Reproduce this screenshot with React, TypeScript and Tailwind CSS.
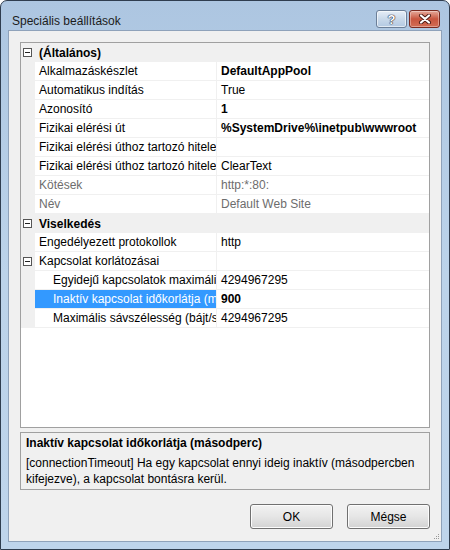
import React from "react"

type Row =
  | { kind: "cat"; label: string; bold?: boolean; minus?: boolean; indent?: boolean }
  | { kind: "prop"; label: string; value: string; bold?: boolean; dim?: boolean; indent?: boolean; selected?: boolean; minus?: boolean }

const rows: Row[] = [
  { kind: "cat", label: "(Általános)", bold: true, minus: true },
  { kind: "prop", label: "Alkalmazáskészlet", value: "DefaultAppPool", bold: true },
  { kind: "prop", label: "Automatikus indítás", value: "True" },
  { kind: "prop", label: "Azonosító", value: "1", bold: true },
  { kind: "prop", label: "Fizikai elérési út", value: "%SystemDrive%\\inetpub\\wwwroot", bold: true },
  { kind: "prop", label: "Fizikai elérési úthoz tartozó hitelesítő adatok", value: "" },
  { kind: "prop", label: "Fizikai elérési úthoz tartozó hitelesítési típus", value: "ClearText" },
  { kind: "prop", label: "Kötések", value: "http:*:80:", dim: true },
  { kind: "prop", label: "Név", value: "Default Web Site", dim: true },
  { kind: "cat", label: "Viselkedés", bold: true, minus: true },
  { kind: "prop", label: "Engedélyezett protokollok", value: "http" },
  { kind: "prop", label: "Kapcsolat korlátozásai", value: "", minus: true },
  { kind: "prop", label: "Egyidejű kapcsolatok maximális száma", value: "4294967295", indent: true },
  { kind: "prop", label: "Inaktív kapcsolat időkorlátja (másodperc)", value: "900", bold: true, indent: true, selected: true },
  { kind: "prop", label: "Maximális sávszélesség (bájt/s)", value: "4294967295", indent: true },
]

function MinusBox() {
  return (
    <span className="relative block w-[9px] h-[9px] border border-[#555] bg-white">
      <span className="absolute left-[1px] top-[3px] w-[5px] h-[1px] bg-[#222]" />
    </span>
  )
}

function GridRow({ row }: { row: Row }) {
  if (row.kind === "cat") {
    return (
      <div className="flex h-[19px] bg-[#f0f0f0]">
        <div className="w-[14px] flex items-center pl-[2px]">{row.minus && <MinusBox />}</div>
        <div className="pl-[4px] pt-[1px] leading-[18px] font-bold text-black">{row.label}</div>
      </div>
    )
  }
  return (
    <div className="flex h-[19px]">
      <div className="w-[14px] shrink-0 flex items-center pl-[2px] bg-[#f0f0f0]">{row.minus && <MinusBox />}</div>
      <div
        className={
          "w-[182px] shrink-0 overflow-hidden whitespace-nowrap border-r border-b border-[#f0f0f0] pt-[1px] leading-[17px] " +
          (row.indent ? "pl-[18px] " : "pl-[4px] ") +
          (row.selected ? "bg-[#3399ff] text-white" : row.dim ? "text-[#6d6d6d]" : "text-black")
        }
      >
        {row.label}
      </div>
      <div
        className={
          "flex-1 overflow-hidden whitespace-nowrap border-b border-[#f0f0f0] pl-[4px] pt-[1px] leading-[17px] " +
          (row.bold ? "font-bold " : "") +
          (row.dim ? "text-[#6d6d6d]" : "text-black")
        }
      >
        {row.value}
      </div>
    </div>
  )
}

function CaptionButtons() {
  return (
    <div className="flex gap-[2px] mt-[9px] mr-[9px]">
      <div className="w-[31px] h-[18px] rounded-[3px] border border-[#6c7f98] bg-gradient-to-b from-[#e6eef7] via-[#c9d9ea] to-[#b3c9e2] flex items-center justify-center shadow-[inset_0_0_0_1px_rgba(255,255,255,0.6)]">
        <span className="text-[13px] leading-none font-bold text-white [text-shadow:0_0_1px_#223,0_0_1px_#223,0_0_1px_#223]">?</span>
      </div>
      <div className="w-[31px] h-[18px] rounded-[3px] border border-[#7a2a20] bg-gradient-to-b from-[#e4a99b] via-[#c8553f] to-[#d26d55] flex items-center justify-center shadow-[inset_0_0_0_1px_rgba(255,255,255,0.35)]">
        <svg width="14" height="10" viewBox="0 0 14 10">
          <path d="M3 1.5 L11 8.5 M11 1.5 L3 8.5" stroke="#4a1a14" strokeWidth="4" strokeLinecap="round" />
          <path d="M3 1.5 L11 8.5 M11 1.5 L3 8.5" stroke="#ffffff" strokeWidth="2.2" strokeLinecap="round" />
        </svg>
      </div>
    </div>
  )
}

function Btn({ children }: { children: React.ReactNode }) {
  return (
    <div className="w-[83px] h-[25px] rounded-[3px] border border-[#707070] bg-gradient-to-b from-[#f2f2f2] via-[#e6e6e6] to-[#d2d2d2] flex items-center justify-center text-black shadow-[inset_0_0_0_1px_#fcfcfc]">
      {children}
    </div>
  )
}

export default function App() {
  return (
    <div className="w-[450px] h-[550px] font-['Segoe_UI','Liberation_Sans',sans-serif] text-[12px] text-black">
      <div className="w-[450px] h-[550px] flex flex-col border border-[#2f3d4f] rounded-t-[7px] bg-gradient-to-b from-[#adc6e1] via-[#bcd3ea] to-[#bed4eb]">
        <div className="h-[29px] flex items-start shrink-0">
          <div className="pl-[11px] pt-[12px] leading-[16px] text-[#1b1b1b]">Speciális beállítások</div>
          <div className="ml-auto">
            <CaptionButtons />
          </div>
        </div>
        <div className="flex-1 px-[7px] pb-[7px] flex">
          <div className="relative flex-1 flex flex-col border border-[#8fa2ba] bg-[#f0f0f0] p-[11px]">
            <div className="h-[386px] border border-[#a0a0a0] bg-white flex flex-col">
              {rows.map((r, i) => (
                <GridRow key={i} row={r} />
              ))}
            </div>
            <div className="mt-[4px] h-[58px] border border-[#a0a0a0] bg-[#f0f0f0] px-[5px] pt-[2px]">
              <div className="font-bold leading-[16px]">Inaktív kapcsolat időkorlátja (másodperc)</div>
              <div className="mt-[4px] leading-[16px]">
                [connectionTimeout] Ha egy kapcsolat ennyi ideig inaktív (másodpercben kifejezve), a kapcsolat bontásra kerül.
              </div>
            </div>
            <div className="mt-[14px] flex justify-end gap-[14px]">
              <Btn>OK</Btn>
              <Btn>Mégse</Btn>
            </div>
            <div className="absolute right-[2px] bottom-[2px] flex flex-col items-end gap-[1px]">
              <div className="flex gap-[1px]"><span className="w-[1px] h-[1px] bg-[#999]" /></div>
              <div className="flex gap-[1px]"><span className="w-[1px] h-[1px] bg-[#999]" /><span className="w-[1px] h-[1px] bg-[#999]" /></div>
              <div className="flex gap-[1px]"><span className="w-[1px] h-[1px] bg-[#999]" /><span className="w-[1px] h-[1px] bg-[#999]" /><span className="w-[1px] h-[1px] bg-[#999]" /></div>
            </div>
          </div>
        </div>
      </div>
    </div>
  )
}
